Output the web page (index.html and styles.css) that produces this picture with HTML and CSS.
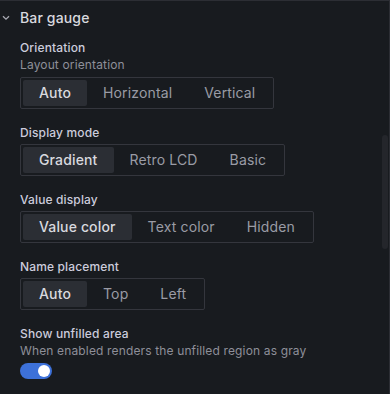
FILE: index.html
```html
<!DOCTYPE html>
<html>
<head>
	<meta charset="UTF-8">
	<title>Bar gauge</title>
	<link rel="stylesheet" href="styles.css">
</head>
<body>

<div class="pane">
	<div class="section-head">
		<svg class="chevron" width="8" height="6" viewBox="0 0 8 6"><path d="M1 1.2 L4 4.2 L7 1.2" fill="none" stroke="#a8a9b2" stroke-width="1.3"/></svg>
		<span class="section-title">Bar gauge</span>
	</div>

	<div class="section-body">
		<div class="field">
			<div class="label">Orientation</div>
			<div class="desc">Layout orientation</div>
			<div class="radio-group">
				<span class="radio active">Auto</span>
				<span class="radio">Horizontal</span>
				<span class="radio">Vertical</span>
			</div>
		</div>

		<div class="field">
			<div class="label">Display mode</div>
			<div class="radio-group">
				<span class="radio active">Gradient</span>
				<span class="radio">Retro LCD</span>
				<span class="radio">Basic</span>
			</div>
		</div>

		<div class="field">
			<div class="label">Value display</div>
			<div class="radio-group">
				<span class="radio active">Value color</span>
				<span class="radio">Text color</span>
				<span class="radio">Hidden</span>
			</div>
		</div>

		<div class="field">
			<div class="label">Name placement</div>
			<div class="radio-group">
				<span class="radio active">Auto</span>
				<span class="radio">Top</span>
				<span class="radio">Left</span>
			</div>
		</div>

		<div class="field">
			<div class="label">Show unfilled area</div>
			<div class="desc">When enabled renders the unfilled region as gray</div>
			<div class="switch"><span class="knob"></span></div>
		</div>
	</div>

	<div class="scrollbar"></div>
</div>

</body>
</html>
```

FILE: styles.css
```css
*{ margin: 0; padding: 0; box-sizing: border-box;}
html, body{ background: #181b1f;}
body{ font-family: Inter, "Noto Sans", sans-serif; color: #ccccdc; width: 390px; height: 394px; overflow: hidden; letter-spacing: 0.009em;}

.pane{ position: relative; height: 394px; border-top: 1px solid #2c2e34; border-right: 1px solid #2c2e34;}

.section-head{ display: flex; align-items: center; padding: 6px 0 6px 2px; height: 33px;}
.chevron{ display: block; margin-right: 10px; margin-top: 1px;}
.section-title{ font-size: 14px; font-weight: 500; line-height: 20px; color: #d8d9df;}

.section-body{ padding: 6px 0 0 20px;}

.field{ margin-bottom: 16px;}
.label{ font-size: 12px; font-weight: 500; line-height: 15px; color: #ccccdc;}
.desc{ font-size: 12px; line-height: 16px; margin-top: 2px; color: #8e8f99;}
.label + .radio-group{ margin-top: 4px;}
.desc + .radio-group, .desc + .switch{ margin-top: 4px;}

.radio-group{ display: inline-flex; padding: 2px; border: 1px solid #34363d; border-radius: 2px;}
.radio{ display: block; height: 26px; line-height: 26px; padding: 0 16px; font-size: 14px; color: #9a9ba5; border-radius: 2px;}
.radio.active{ background: #2b2e34; color: #d8d9df; font-weight: 500;}

.switch{ position: relative; width: 32px; height: 16px; border-radius: 8px; background: #3d71d9;}
.knob{ position: absolute; right: 2px; top: 2px; width: 12px; height: 12px; border-radius: 50%; background: #fff;}

.scrollbar{ position: absolute; right: 1px; top: 134px; width: 6px; height: 114px; border-radius: 3px; background: #24262b;}
```
